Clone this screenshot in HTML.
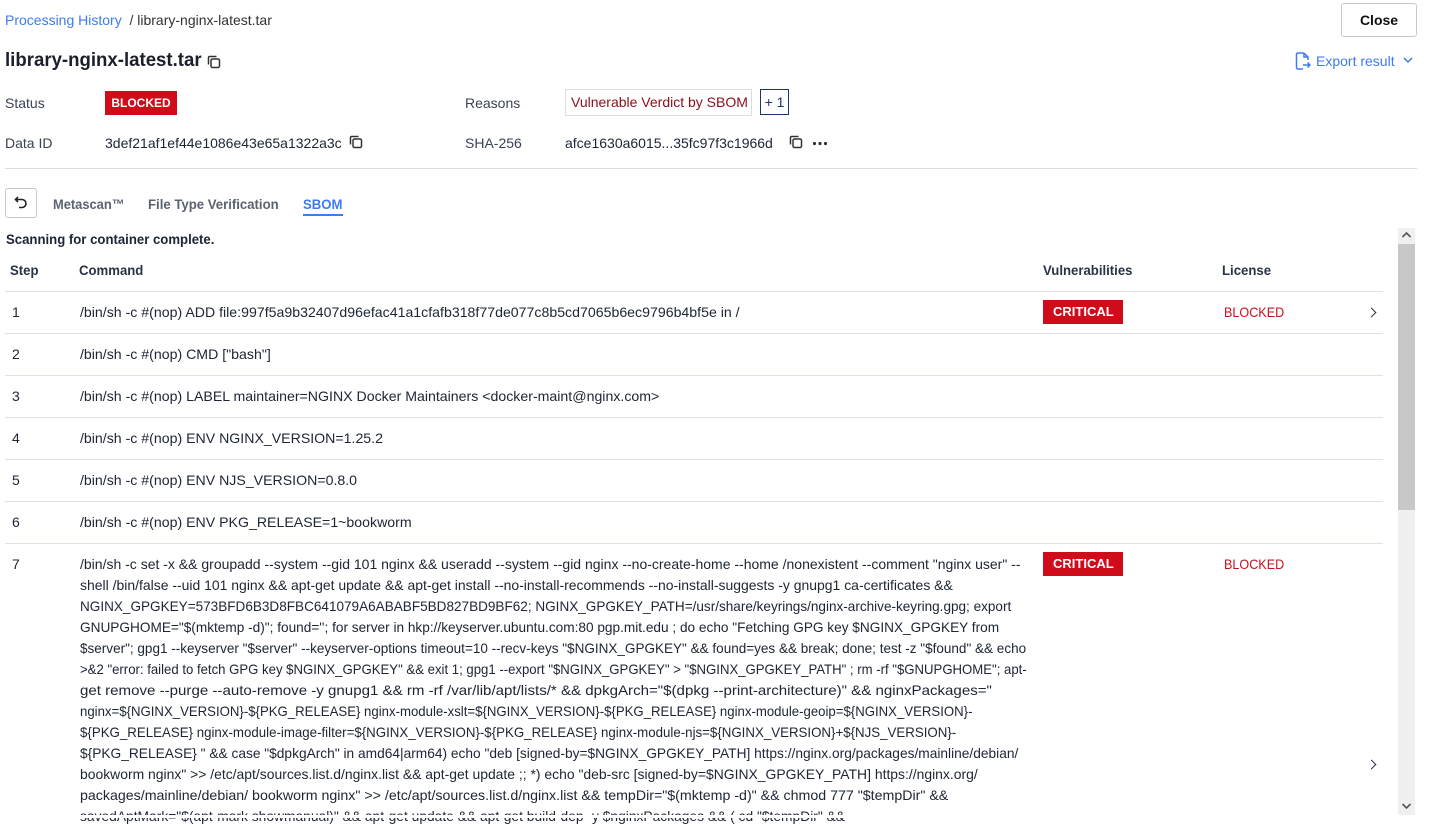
<!DOCTYPE html>
<html><head><meta charset="utf-8"><style>
*{margin:0;padding:0;box-sizing:border-box}
body{width:1429px;height:818px;overflow:hidden;background:#fff;font-family:"Liberation Sans",sans-serif;color:#1d2433;position:relative}
.a{position:absolute;white-space:nowrap}
.c{display:inline-block;transform:scaleX(.94);transform-origin:0 0;white-space:nowrap}
.d{display:inline-block;transform:scaleX(1.01);transform-origin:0 0;white-space:nowrap}
.lbl{font-size:14px;color:#3b4252}
.hr{position:absolute;left:5px;width:1378px;height:1px;background:#dde1ea}
.cmd{font-size:14px;color:#1d2433}
.l{position:absolute;left:80px;font-size:14px;color:#1d2433;white-space:nowrap;transform-origin:0 0}
.crit{position:absolute;background:#d00c1b;color:#fff;font-weight:bold;font-size:13px;width:80px;height:24px;line-height:24px;padding-left:10px}
.blk{position:absolute;color:#c8101e;font-size:14px}
.chev{position:absolute;width:7px;height:7px;border-right:1.5px solid #2a3345;border-top:1.5px solid #2a3345;transform:rotate(45deg)}
</style></head><body>
<div class="a" style="left:5px;top:12px;font-size:14px"><span style="color:#3d7bf0">Processing History</span> <span style="color:#333">&nbsp;/ library-nginx-latest.tar</span></div>
<div class="a" style="left:1341px;top:3px;width:76px;height:34px;border:1px solid #c4c9d2;border-radius:3px;font-size:14px;font-weight:bold;text-align:center;line-height:32px;color:#111">Close</div>
<div class="a" style="left:5px;top:50px;font-size:19px;font-weight:bold;color:#1a1f2b"><span class="d" style="transform:scaleX(.98)">library-nginx-latest.tar</span></div>
<svg class="a" style="left:207px;top:55px" width="14" height="14" viewBox="0 0 14 14" fill="none" stroke="#333" stroke-width="1.5"><rect x="4" y="4" width="8.5" height="8.5" rx="1.5"/><path d="M1.5 9.5V2.5a1 1 0 0 1 1-1h7"/></svg>
<svg class="a" style="left:1295px;top:52px" width="16" height="18" viewBox="0 0 16 18" fill="none" stroke="#3d7bf0" stroke-width="1.5"><path d="M9 1H3a1.5 1.5 0 0 0-1.5 1.5v13A1.5 1.5 0 0 0 3 17h5M9 1l4 4v3M9 1v4h4M8 13h7M12.5 10.5 15 13l-2.5 2.5"/></svg>
<div class="a" style="left:1316px;top:53px;font-size:14px;color:#3d7bf0">Export result</div>
<svg class="a" style="left:1403px;top:57px" width="10" height="7" viewBox="0 0 10 7" fill="none" stroke="#3d7bf0" stroke-width="1.5"><path d="M1 1l4 4 4-4"/></svg>

<div class="a lbl" style="left:5px;top:95px">Status</div>
<div class="a" style="left:105px;top:91px;width:72px;height:24px;background:#d00c1b;color:#fff;font-weight:bold;font-size:12px;line-height:25px;text-align:center">BLOCKED</div>
<div class="a lbl" style="left:465px;top:95px">Reasons</div>
<div class="a" style="left:565px;top:89px;width:187px;height:27px;border:1px solid #dadde3;font-size:14px;color:#8c0d1a;line-height:25px;padding-left:5px">Vulnerable Verdict by SBOM</div>
<div class="a" style="left:760px;top:89px;width:29px;height:26px;border:1px solid #1e3370;font-size:14px;color:#1e3370;line-height:24px;text-align:center">+ 1</div>

<div class="a lbl" style="left:5px;top:135px">Data ID</div>
<div class="a" style="left:105px;top:135px;font-size:14px;color:#1d2433">3def21af1ef44e1086e43e65a1322a3c</div>
<svg class="a" style="left:349px;top:135px" width="14" height="14" viewBox="0 0 14 14" fill="none" stroke="#333" stroke-width="1.5"><rect x="4" y="4" width="8.5" height="8.5" rx="1.5"/><path d="M1.5 9.5V2.5a1 1 0 0 1 1-1h7"/></svg>
<div class="a lbl" style="left:465px;top:135px">SHA-256</div>
<div class="a" style="left:565px;top:135px;font-size:14px;color:#1d2433">afce1630a6015...35fc97f3c1966d</div>
<svg class="a" style="left:789px;top:135px" width="14" height="14" viewBox="0 0 14 14" fill="none" stroke="#333" stroke-width="1.5"><rect x="4" y="4" width="8.5" height="8.5" rx="1.5"/><path d="M1.5 9.5V2.5a1 1 0 0 1 1-1h7"/></svg>
<svg class="a" style="left:812px;top:141px" width="16" height="5" viewBox="0 0 16 5" fill="#333"><circle cx="2.5" cy="2.5" r="1.6"/><circle cx="8" cy="2.5" r="1.6"/><circle cx="13.5" cy="2.5" r="1.6"/></svg>
<div class="a" style="left:5px;top:168px;width:1412px;height:1px;background:#dadde3"></div>

<div class="a" style="left:5px;top:188px;width:32px;height:30px;border:1px solid #c4c9d2;border-radius:3px"></div>
<svg class="a" style="left:14px;top:196px" width="14" height="13" viewBox="0 0 14 13" fill="none" stroke="#222" stroke-width="1.6"><path d="M4 1 1.5 3.5 4 6M1.5 3.5H8a4 4 0 0 1 0 8H5"/></svg>
<div class="a" style="left:53px;top:196px;font-size:14px;font-weight:bold;color:#5b6270"><span class="c" style="transform:scaleX(.92)">Metascan™</span></div>
<div class="a" style="left:148px;top:196px;font-size:14px;font-weight:bold;color:#5b6270"><span class="c">File Type Verification</span></div>
<div class="a" style="left:303px;top:196px;font-size:14px;font-weight:bold;color:#3d7bf0"><span class="c">SBOM</span></div>
<div class="a" style="left:303px;top:214px;width:40px;height:2px;background:#3d7bf0"></div>

<div class="a" style="left:6px;top:231px;font-size:14px;font-weight:bold;color:#1d2433"><span class="c">Scanning for container complete.</span></div>
<div class="a" style="left:10px;top:262px;font-size:14px;font-weight:bold;color:#2a3345"><span class="c">Step</span></div>
<div class="a" style="left:79px;top:262px;font-size:14px;font-weight:bold;color:#2a3345"><span class="c">Command</span></div>
<div class="a" style="left:1043px;top:262px;font-size:14px;font-weight:bold;color:#2a3345"><span class="c">Vulnerabilities</span></div>
<div class="a" style="left:1222px;top:262px;font-size:14px;font-weight:bold;color:#2a3345"><span class="c">License</span></div>
<div class="hr" style="top:291px"></div>
<div class="hr" style="top:333px"></div>
<div class="hr" style="top:375px"></div>
<div class="hr" style="top:417px"></div>
<div class="hr" style="top:459px"></div>
<div class="hr" style="top:501px"></div>
<div class="hr" style="top:543px"></div>

<div class="a cmd" style="left:12px;top:304px">1</div>
<div class="a cmd" style="left:80px;top:304px"><span class="d">/bin/sh -c #(nop) ADD file:997f5a9b32407d96efac41a1cfafb318f77de077c8b5cd7065b6ec9796b4bf5e in /</span></div>
<div class="crit" style="left:1043px;top:300px">CRITICAL</div>
<div class="blk" style="left:1224px;top:304px"><span class="c" style="transform:scaleX(.9)">BLOCKED</span></div>
<div class="chev" style="left:1368px;top:309px"></div>

<div class="a cmd" style="left:12px;top:346px">2</div>
<div class="a cmd" style="left:80px;top:346px"><span class="d">/bin/sh -c #(nop) CMD ["bash"]</span></div>
<div class="a cmd" style="left:12px;top:388px">3</div>
<div class="a cmd" style="left:80px;top:388px"><span class="d">/bin/sh -c #(nop) LABEL maintainer=NGINX Docker Maintainers &lt;docker-maint@nginx.com&gt;</span></div>
<div class="a cmd" style="left:12px;top:430px">4</div>
<div class="a cmd" style="left:80px;top:430px"><span class="d">/bin/sh -c #(nop) ENV NGINX_VERSION=1.25.2</span></div>
<div class="a cmd" style="left:12px;top:472px">5</div>
<div class="a cmd" style="left:80px;top:472px"><span class="d">/bin/sh -c #(nop) ENV NJS_VERSION=0.8.0</span></div>
<div class="a cmd" style="left:12px;top:514px">6</div>
<div class="a cmd" style="left:80px;top:514px"><span class="d">/bin/sh -c #(nop) ENV PKG_RELEASE=1~bookworm</span></div>

<div class="a cmd" style="left:12px;top:556px">7</div>
<div class="l" style="top:556px;transform:scaleX(1.0)">/bin/sh -c set -x &amp;&amp; groupadd --system --gid 101 nginx &amp;&amp; useradd --system --gid nginx --no-create-home --home /nonexistent --comment "nginx user" --</div>
<div class="l" style="top:577px;transform:scaleX(.997)">shell /bin/false --uid 101 nginx &amp;&amp; apt-get update &amp;&amp; apt-get install --no-install-recommends --no-install-suggests -y gnupg1 ca-certificates &amp;&amp;</div>
<div class="l" style="top:598px;transform:scaleX(.968)">NGINX_GPGKEY=573BFD6B3D8FBC641079A6ABABF5BD827BD9BF62; NGINX_GPGKEY_PATH=/usr/share/keyrings/nginx-archive-keyring.gpg; export</div>
<div class="l" style="top:619px;transform:scaleX(.974)">GNUPGHOME="$(mktemp -d)"; found=''; for server in hkp://keyserver.ubuntu.com:80 pgp.mit.edu ; do echo "Fetching GPG key $NGINX_GPGKEY from</div>
<div class="l" style="top:640px;transform:scaleX(.966)">$server"; gpg1 --keyserver "$server" --keyserver-options timeout=10 --recv-keys "$NGINX_GPGKEY" &amp;&amp; found=yes &amp;&amp; break; done; test -z "$found" &amp;&amp; echo</div>
<div class="l" style="top:661px;transform:scaleX(.94)">&gt;&amp;2 "error: failed to fetch GPG key $NGINX_GPGKEY" &amp;&amp; exit 1; gpg1 --export "$NGINX_GPGKEY" &gt; "$NGINX_GPGKEY_PATH" ; rm -rf "$GNUPGHOME"; apt-</div>
<div class="l" style="top:682px;transform:scaleX(1.077)">get remove --purge --auto-remove -y gnupg1 &amp;&amp; rm -rf /var/lib/apt/lists/* &amp;&amp; dpkgArch="$(dpkg --print-architecture)" &amp;&amp; nginxPackages="</div>
<div class="l" style="top:703px;transform:scaleX(.942)">nginx=${NGINX_VERSION}-${PKG_RELEASE} nginx-module-xslt=${NGINX_VERSION}-${PKG_RELEASE} nginx-module-geoip=${NGINX_VERSION}-</div>
<div class="l" style="top:724px;transform:scaleX(.949)">${PKG_RELEASE} nginx-module-image-filter=${NGINX_VERSION}-${PKG_RELEASE} nginx-module-njs=${NGINX_VERSION}+${NJS_VERSION}-</div>
<div class="l" style="top:745px;transform:scaleX(.981)">${PKG_RELEASE} " &amp;&amp; case "$dpkgArch" in amd64|arm64) echo "deb [signed-by=$NGINX_GPGKEY_PATH] https://nginx.org/packages/mainline/debian/</div>
<div class="l" style="top:766px;transform:scaleX(.994)">bookworm nginx" &gt;&gt; /etc/apt/sources.list.d/nginx.list &amp;&amp; apt-get update ;; *) echo "deb-src [signed-by=$NGINX_GPGKEY_PATH] https://nginx.org/</div>
<div class="l" style="top:787px;transform:scaleX(1.014)">packages/mainline/debian/ bookworm nginx" &gt;&gt; /etc/apt/sources.list.d/nginx.list &amp;&amp; tempDir="$(mktemp -d)" &amp;&amp; chmod 777 "$tempDir" &amp;&amp;</div>
<div class="l" style="top:808px;transform:scaleX(.986)">savedAptMark="$(apt-mark showmanual)" &amp;&amp; apt-get update &amp;&amp; apt-get build-dep -y $nginxPackages &amp;&amp; ( cd "$tempDir" &amp;&amp;</div>
<div class="crit" style="left:1043px;top:552px">CRITICAL</div>
<div class="blk" style="left:1224px;top:556px"><span class="c" style="transform:scaleX(.9)">BLOCKED</span></div>
<div class="chev" style="left:1368px;top:761px"></div>
<div class="a" style="left:0;top:815px;width:1429px;height:3px;background:#fff"></div>

<div class="a" style="left:1398px;top:228px;width:17px;height:587px;background:#f0f0f0"></div>
<div class="a" style="left:1398px;top:244px;width:17px;height:266px;background:#c8c8c8"></div>
<svg class="a" style="left:1401px;top:231px" width="11" height="8" viewBox="0 0 11 8" fill="none" stroke="#555" stroke-width="1.6"><path d="M1.5 6 5.5 2l4 4"/></svg>
<svg class="a" style="left:1401px;top:802px" width="11" height="8" viewBox="0 0 11 8" fill="none" stroke="#555" stroke-width="1.6"><path d="M1.5 2l4 4 4-4"/></svg>
</body></html>
